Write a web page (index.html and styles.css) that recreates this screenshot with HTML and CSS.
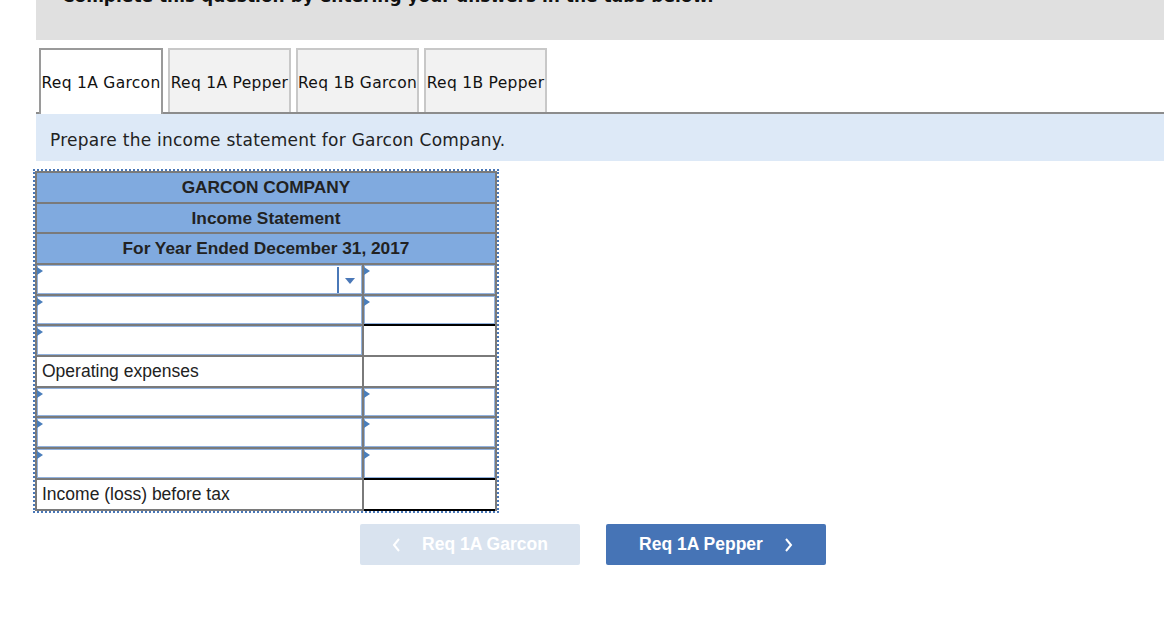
FILE: index.html
```html
<!DOCTYPE html>
<html>
<head>
<meta charset="utf-8">
<link rel="stylesheet" href="styles.css">
</head>
<body>
<div class="page">
  <div class="banner"><div class="banner-text">Complete this question by entering your answers in the tabs below.</div></div>

  <div class="tabs">
    <div class="tab active">Req 1A Garcon</div>
    <div class="tab">Req 1A Pepper</div>
    <div class="tab">Req 1B Garcon</div>
    <div class="tab">Req 1B Pepper</div>
  </div>

  <div class="prompt">Prepare the income statement for Garcon Company.</div>

  <div class="sheet">
    <div class="grid">
      <div class="head h1">GARCON COMPANY</div>
      <div class="head">Income Statement</div>
      <div class="head">For Year Ended December 31, 2017</div>

      <div class="cell"><div class="inp select"><span class="flag"></span><span class="drop"><span class="caret"></span></span></div></div>
      <div class="cell"><div class="inp"><span class="flag"></span></div></div>

      <div class="cell"><div class="inp"><span class="flag"></span></div></div>
      <div class="cell under"><div class="inp"><span class="flag"></span></div></div>

      <div class="cell"><div class="inp"><span class="flag"></span></div></div>
      <div class="cell"></div>

      <div class="cell label">Operating expenses</div>
      <div class="cell"></div>

      <div class="cell"><div class="inp"><span class="flag"></span></div></div>
      <div class="cell"><div class="inp"><span class="flag"></span></div></div>

      <div class="cell"><div class="inp"><span class="flag"></span></div></div>
      <div class="cell"><div class="inp"><span class="flag"></span></div></div>

      <div class="cell"><div class="inp"><span class="flag"></span></div></div>
      <div class="cell"><div class="inp"><span class="flag"></span></div></div>

      <div class="cell label">Income (loss) before tax</div>
      <div class="cell total"></div>
    </div>
  </div>

  <div class="nav">
    <div class="btn prev">
      <svg class="chev" width="9" height="14" viewBox="0 0 9 14"><polyline points="7,1 2,7 7,13" fill="none" stroke="#fff" stroke-width="2"/></svg>
      <span>Req 1A Garcon</span>
    </div>
    <div class="btn next">
      <span>Req 1A Pepper</span>
      <svg class="chev" width="9" height="14" viewBox="0 0 9 14"><polyline points="2,1 7,7 2,13" fill="none" stroke="#fff" stroke-width="2"/></svg>
    </div>
  </div>
</div>
</body>
</html>
```

FILE: styles.css
```css
html, body {
  margin: 0;
  padding: 0;
  background: #ffffff;
}

.page {
  margin-left: 36px;
  font-family: "DejaVu Sans", Verdana, sans-serif;
  color: #222;
}

.banner {
  height: 40px;
  background: #e0e0e0;
  overflow: hidden;
}

.banner-text {
  margin-top: -14px;
  padding-left: 26px;
  font-size: 17px;
  line-height: 20px;
  font-weight: bold;
  color: #111;
  white-space: nowrap;
}

.tabs {
  display: flex;
  gap: 5px;
  margin-top: 8px;
  padding-left: 3px;
  border-bottom: 2px solid #8c8c8c;
  height: 64px;
  align-items: flex-end;
}

.tab {
  box-sizing: border-box;
  width: 123px;
  height: 64px;
  background: #f2f2f2;
  border: 2px solid #c8c8c8;
  border-bottom: none;
  display: flex;
  align-items: center;
  justify-content: center;
  font-size: 15.5px;
  letter-spacing: 0.3px;
  padding-top: 4px;
  color: #111;
  white-space: nowrap;
}

.tab.active {
  width: 124px;
  background: #ffffff;
  border-color: #9a9a9a;
  height: 66px;
  margin-bottom: -2px;
  padding-top: 2px;
}

.prompt {
  box-sizing: border-box;
  height: 47px;
  background: #dde9f7;
  padding: 16px 0 0 14px;
  font-size: 17px;
  line-height: 20px;
  letter-spacing: 0.25px;
  color: #222;
}

.sheet {
  margin-top: 8px;
  margin-left: -3px;
  width: 462px;
  border: 2px dotted #4a78b8;
}

.grid {
  display: grid;
  grid-template-columns: 325px 131px;
  grid-template-rows: 29px 28px 29px 29px 28px 29px 29px 28px 29px 29px 29px;
  gap: 2px;
  padding: 2px;
  background: #7a7a7a;
  font-family: "Liberation Sans", Arial, sans-serif;
}

.head {
  grid-column: 1 / 3;
  background: #80aadf;
  font-weight: bold;
  font-size: 17.3px;
  color: #222;
  display: flex;
  align-items: center;
  justify-content: center;
}

.cell {
  background: #ffffff;
  position: relative;
}

.cell.label {
  display: flex;
  align-items: center;
  padding-left: 5px;
  font-size: 17.5px;
  color: #222;
}

.cell.under {
  box-shadow: 0 2px 0 #000;
  z-index: 1;
}

.cell.total {
  box-shadow: 0 -2px 0 #000, 0 2px 0 #000;
}

.inp {
  position: relative;
  box-sizing: border-box;
  height: 100%;
  border: 1px solid #92b2de;
  background: #ffffff;
}

.flag {
  position: absolute;
  left: -1px;
  top: 1px;
  width: 0;
  height: 0;
  border-top: 4px solid transparent;
  border-bottom: 4px solid transparent;
  border-left: 6px solid #4a7ebb;
}

.inp.select {
  display: flex;
  justify-content: flex-end;
}

.drop {
  box-sizing: border-box;
  width: 24px;
  height: 26px;
  margin-top: 1px;
  border-left: 2px solid #4a78b8;
  display: flex;
  align-items: center;
  justify-content: center;
}

.caret {
  width: 0;
  height: 0;
  border-left: 5px solid transparent;
  border-right: 5px solid transparent;
  border-top: 6px solid #4a78b8;
  margin-top: 1px;
}

.nav {
  display: flex;
  gap: 26px;
  margin-top: 11px;
  padding-left: 324px;
}

.btn {
  box-sizing: border-box;
  width: 220px;
  height: 41px;
  border-radius: 2px;
  display: flex;
  align-items: center;
  justify-content: center;
  gap: 21px;
  font-family: "Liberation Sans", Arial, sans-serif;
  font-weight: bold;
  font-size: 17.5px;
  color: #ffffff;
}

.btn.prev {
  background: #d9e3ef;
}

.btn.next {
  background: #4674b6;
}

.chev {
  display: block;
}
```
